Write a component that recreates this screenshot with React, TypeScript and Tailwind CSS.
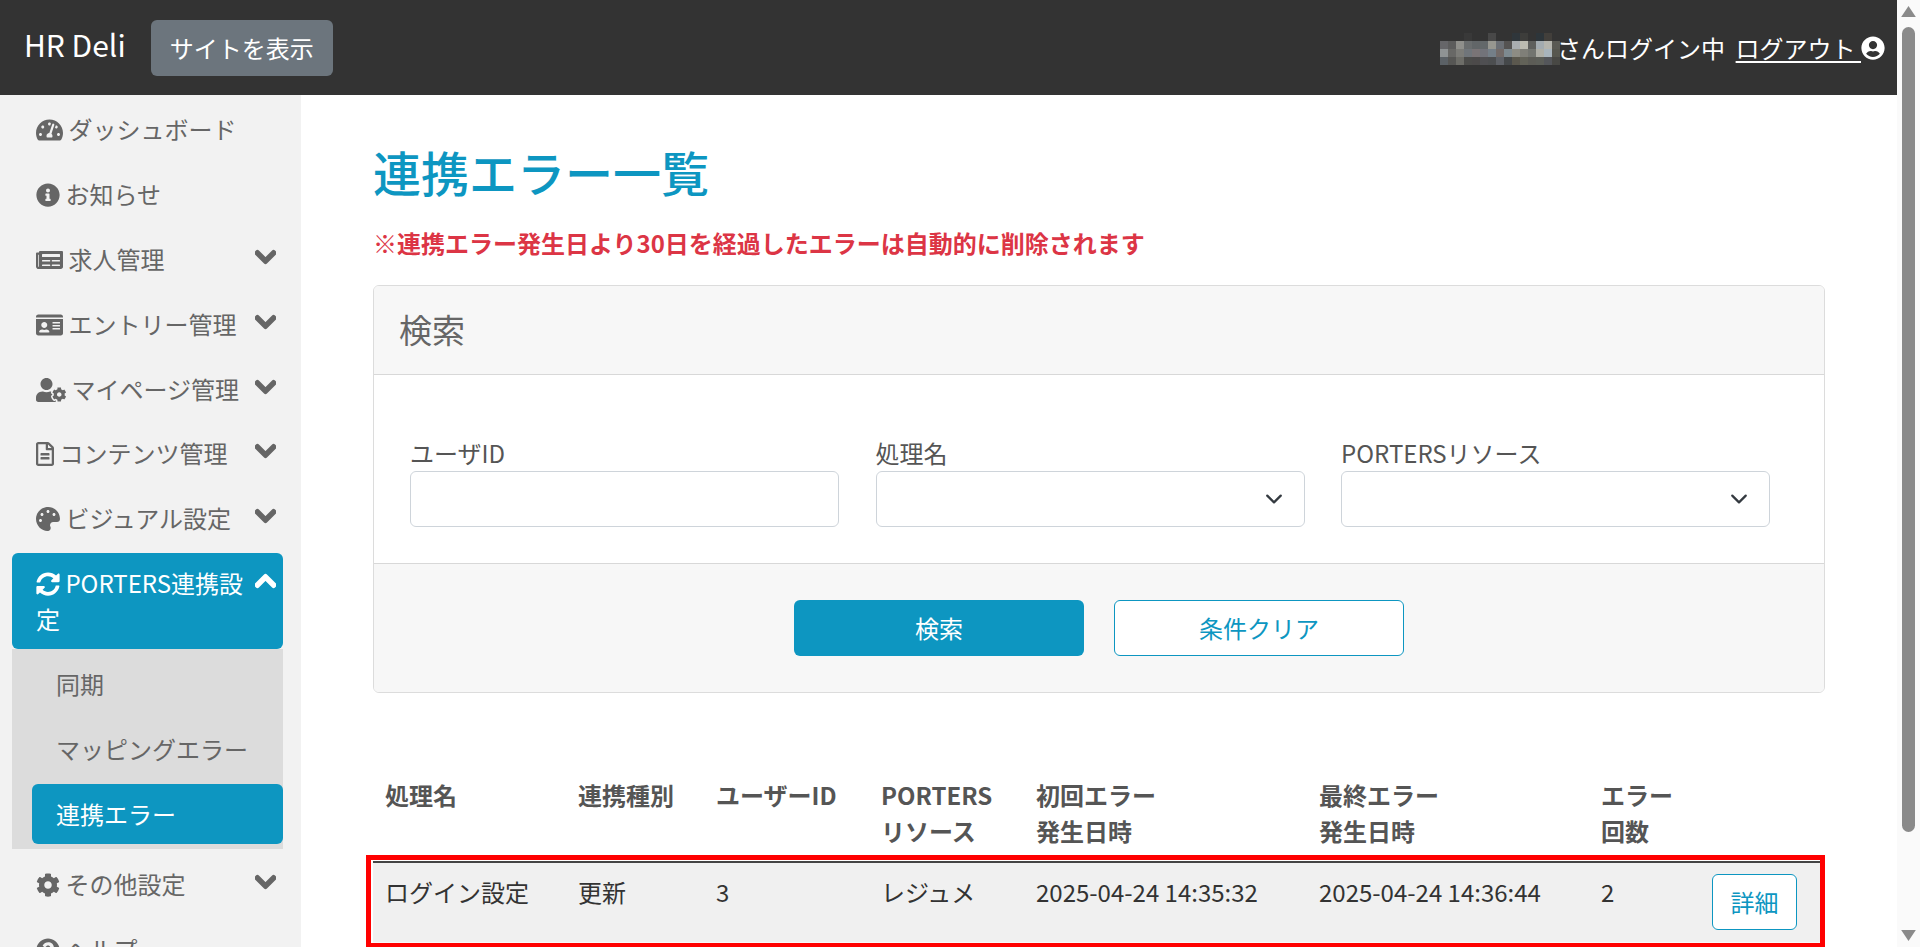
import type { ReactNode } from "react";
import {
  FaChevronDown,
  FaChevronUp,
  FaCog,
  FaIdCard,
  FaInfoCircle,
  FaNewspaper,
  FaPalette,
  FaQuestionCircle,
  FaRegFileAlt,
  FaSyncAlt,
  FaTachometerAlt,
  FaUserCircle,
  FaUserCog,
} from "react-icons/fa";

const BG = "#333333";
const mosaic = [
  [BG, BG, BG, "#393939", BG, BG, "#484848", BG, BG, "#2f363b", "#3d3d3b", BG, "#2d353a", "#423f3b", BG],
  ["#666669", "#5c5c5c", "#8f8f8b", "#6a6d6e", "#626668", "#63686a", "#979790", "#6b6f75", "#555352", "#a9adb0", "#bcbbb0", "#5e5f5c", "#a3abb0", "#b5b5ae", "#5a5a54"],
  ["#8f9394", "#686866", "#7c7c78", "#70757a", "#7a7476", "#72737a", "#747f88", "#726a68", "#7e8a90", "#8d8c84", "#7f7f78", "#737570", "#aeaea6", "#a8b4bc", "#57574f"],
  ["#5b6166", "#565654", "#6d6d68", "#4c4c4a", "#4c4a4a", "#4f4f52", "#4c4e50", "#5f6268", "#45484a", "#5b584e", "#626258", "#5c5c56", "#5c5e58", "#54565a", "#484844"],
];

function MenuItem({ icon, label, open }: { icon: ReactNode; label: string; open?: boolean }) {
  return (
    <div className="ml-[12px] mr-[18px] mb-[4.8px] px-[24px] py-[12px]">
      {open === false && <FaChevronDown strokeWidth={40} stroke="currentColor" className="float-right mr-[-17px] mt-[4px] h-[24px] w-[21px]" />}
      {icon} {label}
    </div>
  );
}

function SelectBox() {
  return (
    <div className="flex h-[56px] items-center justify-end rounded-[6px] border border-[#ced4da] bg-white pr-[21px]">
      <svg viewBox="0 0 16 16" className="h-[18px] w-[18px]" fill="none" stroke="#343a40" strokeWidth="2" strokeLinecap="round" strokeLinejoin="round">
        <path d="M2 5l6 6 6-6" />
      </svg>
    </div>
  );
}

function Sidebar() {
  return (
    <aside className="w-[301px] shrink-0 bg-[#f2f2f2] pt-[4.4px] text-[#666666]">
      <MenuItem icon={<FaTachometerAlt className="inline h-[24px] w-[27px] align-[-3px]" />} label="ダッシュボード" />
      <MenuItem icon={<FaInfoCircle className="inline h-[24px] w-[24px] align-[-3px]" />} label="お知らせ" />
      <MenuItem icon={<FaNewspaper className="inline h-[24px] w-[27px] align-[-3px]" />} label="求人管理" open={false} />
      <MenuItem icon={<FaIdCard className="inline h-[24px] w-[27px] align-[-3px]" />} label="エントリー管理" open={false} />
      <MenuItem icon={<FaUserCog className="inline h-[24px] w-[30px] align-[-3px]" />} label="マイページ管理" open={false} />
      <MenuItem icon={<FaRegFileAlt className="inline h-[24px] w-[18px] align-[-3px]" />} label="コンテンツ管理" open={false} />
      <MenuItem icon={<FaPalette className="inline h-[24px] w-[24px] align-[-3px]" />} label="ビジュアル設定" open={false} />
      <div className="mb-[4.8px] ml-[12px] mr-[18px]">
        <div className="rounded-[6px] bg-[#0d96c1] px-[24px] py-[12px] text-white">
          <FaChevronUp strokeWidth={40} stroke="currentColor" className="float-right mr-[-17px] mt-[4px] h-[24px] w-[21px]" />
          <FaSyncAlt className="inline h-[24px] w-[24px] align-[-3px]" /> PORTERS連携設定
        </div>
        <div className="bg-[#dcdcdc] pb-[5px] pl-[20px] pt-[5.4px]">
          <div className="mb-[4.8px] px-[24px] py-[12px]">同期</div>
          <div className="mb-[4.8px] px-[24px] py-[12px]">マッピングエラー</div>
          <div className="rounded-[6px] bg-[#0d96c1] px-[24px] py-[12px] text-white">連携エラー</div>
        </div>
      </div>
      <MenuItem icon={<FaCog className="inline h-[24px] w-[24px] align-[-3px]" />} label="その他設定" open={false} />
      <MenuItem icon={<FaQuestionCircle className="inline h-[24px] w-[24px] align-[-3px]" />} label="ヘルプ" />
    </aside>
  );
}

function SearchCard() {
  return (
    <section className="mt-[24.5px] overflow-hidden rounded-[6px] border border-[#dcdcdc]">
      <div className="h-[89px] border-b border-[#d8d8d8] bg-[#f7f7f7] pl-[25px] pt-[23px] text-[33px] leading-[40px] text-[#666666]">検索</div>
      <div className="h-[189px] border-b border-[#d8d8d8] bg-white pl-[36px] pt-[60px]">
        <div className="grid grid-cols-[repeat(3,429px)] gap-x-[36.5px] text-[#555555]">
          <div>
            <div className="leading-[36px]">ユーザID</div>
            <input className="block h-[56px] w-full rounded-[6px] border border-[#ced4da] bg-white" />
          </div>
          <div>
            <div className="leading-[36px]">処理名</div>
            <SelectBox />
          </div>
          <div>
            <div className="leading-[36px]">PORTERSリソース</div>
            <SelectBox />
          </div>
        </div>
      </div>
      <div className="flex h-[128px] items-start justify-center gap-[30px] bg-[#f7f7f7] pt-[36px]">
        <button className="h-[56px] w-[290px] rounded-[6px] bg-[#0d96c1] text-white">検索</button>
        <button className="h-[56px] w-[290px] rounded-[6px] border border-[#0d96c1] bg-white text-[#0d96c1]">条件クリア</button>
      </div>
    </section>
  );
}

function ErrorTable() {
  return (
    <div className="relative mt-[72px]">
      <table className="w-full table-fixed border-collapse">
        <colgroup>
          <col className="w-[193px]" />
          <col className="w-[138px]" />
          <col className="w-[165px]" />
          <col className="w-[155px]" />
          <col className="w-[283px]" />
          <col className="w-[282px]" />
          <col className="w-[111px]" />
          <col />
        </colgroup>
        <thead className="text-left align-top font-bold text-[#555555]">
          <tr>
            <th className="p-[12px]">処理名</th>
            <th className="p-[12px]">連携種別</th>
            <th className="p-[12px]">ユーザーID</th>
            <th className="p-[12px]">PORTERS<br />リソース</th>
            <th className="p-[12px]">初回エラー<br />発生日時</th>
            <th className="p-[12px]">最終エラー<br />発生日時</th>
            <th className="p-[12px]">エラー<br />回数</th>
            <th className="p-[12px]"></th>
          </tr>
        </thead>
        <tbody className="border-t-[2px] border-[#444444] align-top text-[#333333]">
          <tr className="border-b border-[#f8f8f8] bg-[#f0f0f0]">
            <td className="px-[12px] pb-[12px] pt-[11px]">ログイン設定</td>
            <td className="px-[12px] pb-[12px] pt-[11px]">更新</td>
            <td className="px-[12px] pb-[12px] pt-[11px]">3</td>
            <td className="px-[12px] pb-[12px] pt-[11px]">レジュメ</td>
            <td className="px-[12px] pb-[12px] pt-[11px]">2025-04-24 14:35:32</td>
            <td className="px-[12px] pb-[12px] pt-[11px]">2025-04-24 14:36:44</td>
            <td className="px-[12px] pb-[12px] pt-[11px]">2</td>
            <td className="px-[12px] pb-[12px] pt-[11px]">
              <button className="h-[56px] w-[85px] rounded-[6px] border border-[#0d96c1] bg-white text-[#0d96c1]">詳細</button>
            </td>
          </tr>
        </tbody>
      </table>
      {/* annotation frame over the row */}
      <div className="absolute left-[-7px] right-0 top-[90px] h-[92px] border-[5px] border-b-[4px] border-[#ff0000]" />
    </div>
  );
}

export default function App() {
  return (
    <div className="flex h-[947px] overflow-hidden bg-white font-['Noto_Sans_CJK_JP','Noto_Sans',sans-serif] text-[24px] leading-[36px]">
      <div className="flex w-[1897px] shrink-0 flex-col">
        <header className="flex h-[95px] shrink-0 items-center justify-between bg-[#333333] pl-[24px] pr-[12px] text-white">
          <div className="flex items-center">
            <span className="mb-[7px] text-[30px] leading-[45px]">HR Deli</span>
            <button className="ml-[25px] mt-[1px] h-[56px] w-[182px] rounded-[6px] bg-[#6c757d] text-white">サイトを表示</button>
          </div>
          <div className="mt-[1px] flex items-center">
            <div className="mr-[-3px] grid grid-cols-[repeat(15,8px)] pt-[1px]">
              {mosaic.flat().map((c, i) => (
                <div key={i} className="h-[8px] w-[8px]" style={{ backgroundColor: c }} />
              ))}
            </div>
            <span>さんログイン中</span>
            <a href="#" className="ml-[10.5px] whitespace-pre underline underline-offset-[3px]">ログアウト </a>
            <FaUserCircle className="h-[24px] w-[24px]" />
          </div>
        </header>
        <div className="flex min-h-0 flex-1">
          <Sidebar />
          <main className="flex-1 px-[72px] pt-[39.5px]">
            <h1 className="text-[48px] font-medium leading-[72px] text-[#0d96c1]">連携エラー一覧</h1>
            <p className="mt-[18px] font-bold text-[#dc3545]">※連携エラー発生日より30日を経過したエラーは自動的に削除されます</p>
            <SearchCard />
            <ErrorTable />
          </main>
        </div>
      </div>
      <div className="flex w-[23px] shrink-0 flex-col items-center bg-[#fafafa] pt-[6px]">
        <svg viewBox="0 0 16 12" className="h-[11px] w-[15px]" fill="#8a8a8a"><path d="M8 0l8 12H0z" /></svg>
        <div className="mt-[10px] h-[805px] w-[13px] rounded-full bg-[#8a8a8a]" />
        <svg viewBox="0 0 16 12" className="mt-[98px] h-[11px] w-[15px]" fill="#8a8a8a"><path d="M8 12L0 0h16z" /></svg>
      </div>
    </div>
  );
}
